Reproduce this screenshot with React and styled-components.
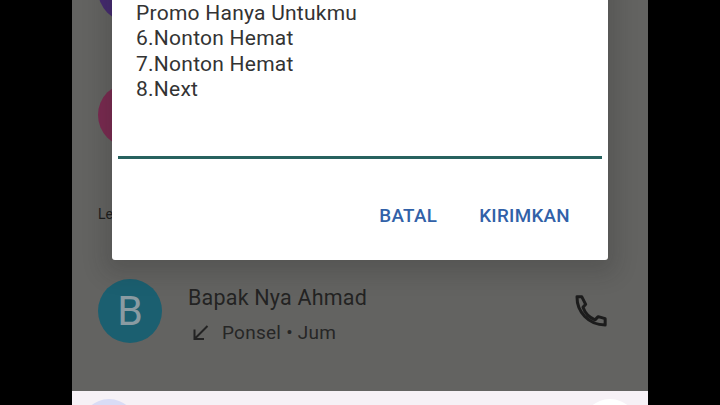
import React from "react";
import styled, { createGlobalStyle } from "styled-components";

const Global = createGlobalStyle`
  html, body { margin: 0; padding: 0; background: #000; }
  body { width: 720px; height: 405px; overflow: hidden; font-family: Roboto, "Noto Sans", sans-serif; }
`;
const Screen = styled.div`
  position: relative;
  width: 576px;
  height: 405px;
  margin: 0 auto;
  overflow: hidden;
  display: flex;
  flex-direction: column;
  background: #636361;
`;
const List = styled.div`
  flex: 1;
  min-height: 0;
  display: flex;
  flex-direction: column;
  margin-top: -42px;
  padding: 0 26px;
`;
const Row = styled.div`
  display: flex;
  align-items: center;
  gap: 26px;
  margin-top: ${p => p.$gap || 0}px;
`;
const Avatar = styled.div`
  width: 64px;
  height: 64px;
  flex: none;
  border-radius: 50%;
  background: ${p => p.$color};
  color: #8a9ba2;
  font-size: 41px;
  display: flex;
  align-items: center;
  justify-content: center;
`;
const Section = styled.div`
  margin-top: 58px;
  font-size: 14px;
  line-height: 18px;
  color: #1d1d1d;
`;
const Info = styled.div`
  flex: 1;
  display: flex;
  flex-direction: column;
  gap: 10px;
  margin-top: 8px;
`;
const Name = styled.div`
  font-size: 21.5px;
  line-height: 26px;
  color: #232323;
  letter-spacing: 0.2px;
`;
const Meta = styled.div`
  display: flex;
  align-items: center;
  gap: 10px;
  margin-left: 2px;
  font-size: 19px;
  line-height: 24px;
  color: #262626;
  letter-spacing: 0.25px;
`;
const Call = styled.div`
  display: flex;
  margin-right: 11px;
`;
const Nav = styled.div`
  flex: none;
  height: 14px;
  background: #f6f1f6;
  display: flex;
  justify-content: space-between;
  padding: 0 10px 0 9px;
  overflow: hidden;
`;
const NavCircle = styled.div`
  width: 56px;
  height: 56px;
  margin-top: 8px;
  border-radius: 50%;
  background: ${p => p.$color};
`;
const Dialog = styled.div`
  position: absolute;
  left: 40px;
  top: -40px;
  width: 496px;
  height: 300px;
  border-radius: 3px;
  background: #fff;
  box-shadow: 0 6px 22px 8px rgba(30, 25, 30, 0.18);
  display: flex;
  flex-direction: column;
  padding: 41px 6px 0;
  box-sizing: border-box;
`;
const Message = styled.div`
  padding: 0 18px;
  height: 155px;
  font-size: 21px;
  line-height: 25.4px;
  letter-spacing: 0.25px;
  color: #333;
  white-space: pre-line;
`;
const Field = styled.div`
  height: 3px;
  background: #27625f;
`;
const Actions = styled.div`
  display: flex;
  justify-content: flex-end;
  gap: 42px;
  padding: 45px 32px 0 0;
`;
const Action = styled.div`
  font-size: 18.8px;
  line-height: 24px;
  font-weight: 500;
  letter-spacing: 0.3px;
  color: #3161a8;
`;

const MissedIcon = () => (
  <svg width="22" height="22" viewBox="0 0 22 22" fill="none" stroke="#232323" strokeWidth="2">
    <path d="M17.5 4 L4.5 17 M4.5 7.5 V17 H14" />
  </svg>
);
const PhoneIcon = () => (
  <svg width="40" height="40" viewBox="0 0 24 24" fill="none" stroke="#1c1c1c" strokeWidth="1.8" strokeLinejoin="round">
    <path d="M6.5 3.5 H3.6 C3.5 12.5 10.5 20.4 20.5 20.4 V16.6 L16.3 15.4 L14.4 17.3 C11 15.9 8.2 12.8 7.2 9.8 L8.8 8 Z" />
  </svg>
);

export default function App() {
  return (
    <Screen>
      <Global />
      <List>
        <Row><Avatar $color="#452a70" /></Row>
        <Row $gap={61}><Avatar $color="#7a2a50" /></Row>
        <Section>Lebih lama</Section>
        <Row $gap={54}>
          <Avatar $color="#1b5f70">B</Avatar>
          <Info>
            <Name>Bapak Nya Ahmad</Name>
            <Meta><MissedIcon />Ponsel • Jum</Meta>
          </Info>
          <Call><PhoneIcon /></Call>
        </Row>
      </List>
      <Nav>
        <NavCircle $color="#d9dcf6" />
        <NavCircle $color="#fff" />
      </Nav>
      <Dialog>
        <Message>{"Promo Hanya Untukmu\n6.Nonton Hemat\n7.Nonton Hemat\n8.Next"}</Message>
        <Field />
        <Actions>
          <Action>BATAL</Action>
          <Action>KIRIMKAN</Action>
        </Actions>
      </Dialog>
    </Screen>
  );
}
